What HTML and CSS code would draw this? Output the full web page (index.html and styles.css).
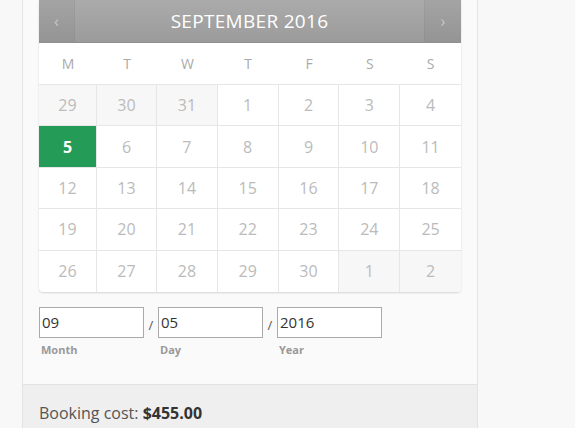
FILE: index.html
```html
<!DOCTYPE html>
<html lang="en">
<head>
    <meta charset="UTF-8">
    <meta name="viewport" content="width=device-width, initial-scale=1.0">
    <title>Booking</title>
    <link rel="stylesheet" href="styles.css">
</head>
<body>
    <div class="panel">
        <div class="panel-body">
            <div class="calendar">
                <div class="cal-header">
                    <span class="cal-nav">&lsaquo;</span>
                    <span class="cal-title">September 2016</span>
                    <span class="cal-nav">&rsaquo;</span>
                </div>
                <div class="cal-weekdays">
                    <span>M</span><span>T</span><span>W</span><span>T</span><span>F</span><span>S</span><span>S</span>
                </div>
                <div class="cal-grid">
                    <span class="other">29</span><span class="other">30</span><span class="other">31</span><span>1</span><span>2</span><span>3</span><span>4</span>
                    <span class="selected">5</span><span>6</span><span>7</span><span>8</span><span>9</span><span>10</span><span>11</span>
                    <span>12</span><span>13</span><span>14</span><span>15</span><span>16</span><span>17</span><span>18</span>
                    <span>19</span><span>20</span><span>21</span><span>22</span><span>23</span><span>24</span><span>25</span>
                    <span>26</span><span>27</span><span>28</span><span>29</span><span>30</span><span class="other">1</span><span class="other">2</span>
                </div>
            </div>

            <div class="date-fields">
                <div class="date-field">
                    <input type="text" value="09">
                    <label>Month</label>
                </div>
                <span class="sep">/</span>
                <div class="date-field">
                    <input type="text" value="05">
                    <label>Day</label>
                </div>
                <span class="sep">/</span>
                <div class="date-field">
                    <input type="text" value="2016">
                    <label>Year</label>
                </div>
            </div>
        </div>
        <div class="panel-footer">
            Booking cost: <strong>$455.00</strong>
        </div>
    </div>
</body>
</html>
```

FILE: styles.css
```css
body {
    font-family: "Open Sans", Arial, sans-serif;
    background-color: #f8f8f8;
    margin: 0;
    padding: 0 0 0 22px;
}
.panel {
    width: 454px;
    background-color: #fafafa;
    border-left: 1px solid #e4e4e4;
    border-right: 1px solid #e4e4e4;
}
.panel-body {
    padding: 0 16px 27px 16px;
}
.calendar {
    background-color: #fff;
    border-radius: 0 0 4px 4px;
    box-shadow: 0 1px 2px rgba(0,0,0,0.15);
    overflow: hidden;
}
.cal-header {
    display: flex;
    height: 43px;
    background: linear-gradient(#ababab, #9b9b9b);
    border-bottom: 1px solid #8f8f8f;
    box-sizing: border-box;
    color: #fff;
}
.cal-nav {
    width: 35px;
    display: flex;
    align-items: center;
    justify-content: center;
    background-color: rgba(0,0,0,0.04);
    color: #c8c8c8;
    font-size: 16px;
}
.cal-nav:first-child {
    border-right: 1px solid rgba(0,0,0,0.03);
}
.cal-nav:last-child {
    width: 36px;
    border-left: 1px solid rgba(0,0,0,0.03);
}
.cal-title {
    flex: 1;
    text-align: center;
    text-transform: uppercase;
    font-size: 19px;
    line-height: 43px;
    letter-spacing: 0.3px;
}
.cal-weekdays,
.cal-grid {
    display: grid;
    grid-template-columns: 58px 60px repeat(5, 1fr);
}
.cal-weekdays {
    height: 41px;
    border-bottom: 1px solid #e6e6e6;
}
.cal-weekdays span {
    display: flex;
    align-items: center;
    justify-content: center;
    color: #aaa;
    font-size: 14px;
}
.cal-grid {
    grid-auto-rows: 41.4px;
}
.cal-grid span {
    display: flex;
    align-items: center;
    justify-content: center;
    color: #bbb;
    font-size: 16px;
    border-right: 1px solid #e6e6e6;
    border-bottom: 1px solid #e6e6e6;
}
.cal-grid span:nth-child(7n) {
    border-right: none;
}
.cal-grid span:nth-last-child(-n+7) {
    border-bottom: none;
}
.cal-grid .other {
    background-color: #f7f7f7;
}
.cal-grid .selected {
    background-color: #249b57;
    color: #fff;
    font-weight: bold;
}
.date-fields {
    display: flex;
    align-items: flex-start;
    margin-top: 15px;
}
.date-field {
    display: flex;
    flex-direction: column;
}
.date-field input {
    width: 105px;
    height: 31px;
    padding: 0 2px;
    border: 1px solid #aaa;
    font-family: inherit;
    font-size: 15px;
    color: #333;
    box-sizing: border-box;
    background-color: #fff;
    margin: 0;
}
.date-field label {
    font-size: 11px;
    font-weight: bold;
    color: #999;
    margin: 4px 0 0 2px;
}
.sep {
    width: 14px;
    text-align: center;
    font-size: 13px;
    color: #555;
    line-height: 36px;
}
.panel-footer {
    background-color: #efefef;
    border-top: 1px solid #e2e2e2;
    padding: 17px 16px 20px 16px;
    font-size: 16px;
    color: #555;
}
.panel-footer strong {
    color: #333;
}
```
